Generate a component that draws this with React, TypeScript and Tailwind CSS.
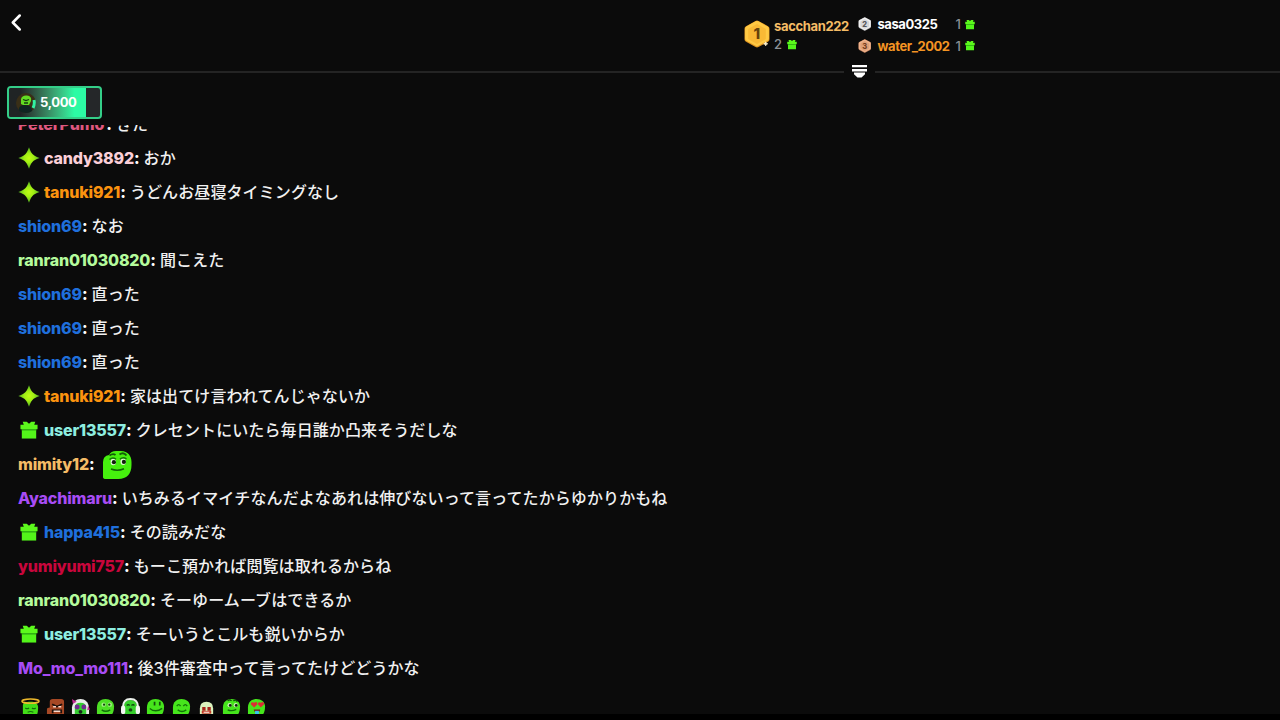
import type { ReactNode } from "react";

type Badge = "spark" | "gift";

interface Message {
  user: string;
  color: string;
  text?: string;
  badge?: Badge;
  emote?: boolean;
}

const messages: Message[] = [
  { user: "PeterPumo", color: "text-[#e0587f] pr-[2px]", text: "きた" },
  { user: "candy3892", color: "text-[#fbcfd8]", text: "おか", badge: "spark" },
  { user: "tanuki921", color: "text-[#fb930f]", text: "うどんお昼寝タイミングなし", badge: "spark" },
  { user: "shion69", color: "text-[#1f6fdc]", text: "なお" },
  { user: "ranran01030820", color: "text-[#b4fb9c]", text: "聞こえた" },
  { user: "shion69", color: "text-[#1f6fdc]", text: "直った" },
  { user: "shion69", color: "text-[#1f6fdc]", text: "直った" },
  { user: "shion69", color: "text-[#1f6fdc]", text: "直った" },
  { user: "tanuki921", color: "text-[#fb930f]", text: "家は出てけ言われてんじゃないか", badge: "spark" },
  { user: "user13557", color: "text-[#8eeee0]", text: "クレセントにいたら毎日誰か凸来そうだしな", badge: "gift" },
  { user: "mimity12", color: "text-[#f5bc66]", emote: true },
  { user: "Ayachimaru", color: "text-[#a84cf5]", text: "いちみるイマイチなんだよなあれは伸びないって言ってたからゆかりかもね" },
  { user: "happa415", color: "text-[#1f6fdc]", text: "その読みだな", badge: "gift" },
  { user: "yumiyumi757", color: "text-[#c8063c]", text: "もーこ預かれば閲覧は取れるからね" },
  { user: "ranran01030820", color: "text-[#b4fb9c]", text: "そーゆームーブはできるか" },
  { user: "user13557", color: "text-[#8eeee0]", text: "そーいうとこルも鋭いからか", badge: "gift" },
  { user: "Mo_mo_mo111", color: "text-[#a84cf5]", text: "後3件審査中って言ってたけどどうかな" },
];

function GiftIcon({ className }: { className: string }) {
  return (
    <svg viewBox="0 0 20 20" className={className}>
      <path d="M3 .8h4.500L10 3l2.500-2.200H17l-1.200 3.500H19.500v5H.5v-5h3.700z" fill="#5cf91c" />
      <path d="M2 9h16v10.500H2z" fill="#53f51a" />
      <path d="M2 9h16v1.600H2z" fill="#2eae12" />
    </svg>
  );
}

function SparkIcon() {
  return (
    <svg viewBox="0 0 22 22" className="h-[22px] w-[22px]">
      <defs>
        <radialGradient id="spark">
          <stop offset="0" stopColor="#c0fc14" />
          <stop offset="0.45" stopColor="#a0ee14" />
          <stop offset="1" stopColor="#4fae20" />
        </radialGradient>
      </defs>
      <path d="M11 .3C12.500 4.500 13.600 6.200 14.700 7.300C15.800 8.400 17.500 9.500 21.700 11C17.500 12.500 15.800 13.600 14.700 14.700C13.600 15.800 12.500 17.500 11 21.700C9.500 17.500 8.400 15.800 7.300 14.700C6.200 13.600 4.500 12.500.3 11C4.500 9.500 6.200 8.400 7.300 7.300C8.400 6.200 9.500 4.500 11 .3Z" fill="url(#spark)" />
    </svg>
  );
}

function HexBadge({ n, className, light, main, dark, ink }: { n: number; className: string; light: string; main: string; dark: string; ink: string }) {
  return (
    <svg viewBox="0 0 26 28" className={className}>
      <path d="M11.500.9a3 3 0 0 1 3 0l9.500 5.300a3 3 0 0 1 1.500 2.600v10.400a3 3 0 0 1-1.500 2.600l-9.500 5.300a3 3 0 0 1-3 0L2 21.800a3 3 0 0 1-1.500-2.600V8.800A3 3 0 0 1 2 6.200z" fill={dark} />
      <path d="M11.700 1.300a2.500 2.500 0 0 1 2.600 0l9.300 5.300a2.500 2.500 0 0 1 1.300 2.200v9.700a2.500 2.500 0 0 1-1.300 2.200L13 26.500 2.400 20.700a2.500 2.500 0 0 1-1.300-2.200V8.800a2.500 2.500 0 0 1 1.300-2.200z" fill={light} />
      <path d="M13 4l8.800 4.900v10.200L13 24l-8.800-4.900V8.900z" fill={main} />
      <text x="12.800" y="19.300" textAnchor="middle" fontFamily="Inter, sans-serif" fontWeight="800" fontSize="15" fill={ink}>{n}</text>
      {n === 1 && <path d="M21.700 21.800l.6 1.400 1.400.6-1.400.6-.6 1.400-.6-1.400-1.400-.6 1.400-.6z" fill="#fff3cf" stroke="#fff3cf" strokeWidth=".8" />}
    </svg>
  );
}

function SlimeEmote() {
  return (
    <svg viewBox="0 0 30 30" className="ml-[7px] mt-[2px] h-[30px] w-[30px]">
      <path d="M1 27V12Q1 6 7 5Q9 1 14 1h5c7 0 10.500 5 10.500 11v3c0 9-5 14-13 14H4Q1 29 1 27z" fill="#46f00e" />
      <path d="M7.500 5.500q3.500-2.500 6-.5M17.500 4.500q4-3 7 1" stroke="#125d08" strokeWidth="1.900" fill="none" />
      <ellipse cx="11.300" cy="12" rx="2.700" ry="3.200" fill="#dff5d3" />
      <ellipse cx="21.200" cy="11.700" rx="2.700" ry="3.200" fill="#dff5d3" />
      <circle cx="11.900" cy="12.200" r="2.100" fill="#111f0d" />
      <circle cx="21.900" cy="11.900" r="2.100" fill="#111f0d" />
      <path d="M7.500 9.500q3-2.700 6.500-.4M18 9.200q3-2.500 6.500-.4" stroke="#147509" strokeWidth="1.500" fill="none" />
      <path d="M9 19q6.500 2.500 13-.3" stroke="#126408" strokeWidth="1.500" fill="none" />
    </svg>
  );
}

const blob = "M1 19V10C1 4 5 1 10 1s9 3 9 8c0 6-2 10-6 10z";

// quick emote bar, each entry is drawn on a 20x20 box
const emotes: ReactNode[] = [
  <>
    <path d="M2 20V8c0-3 3-4 8-4s8 2 8 6-1 10-3 10z" fill="#43dd18" />
    <ellipse cx="10" cy="3.300" rx="9" ry="2.200" fill="none" stroke="#edb92c" strokeWidth="1.600" />
    <path d="M4.500 10.500q2 1.500 4 0M11.500 10.500q2 1.500 4 0M7 15q3-1.500 6 0" stroke="#126b0a" strokeWidth="1.200" fill="none" />
  </>,
  <>
    <path d="M1 20v-8q0-2 3-2V4q0-3 3-3h9q3 0 3 3v16z" fill="#a64825" />
    <path d="M6.500 6.500l5 2.500 5.500-2.500M7 16v-3h9v3" stroke="#1c100c" strokeWidth="1.800" fill="none" />
    <path d="M7.500 9.300h3M13 9.300h3M8 14h7" stroke="#f8d8cb" strokeWidth="1.500" />
  </>,
  <>
    <path d="M1 18V10C2 4 5 1 10 1s8 3 9 9v8l-5 2H5z" fill="#e9ece8" />
    <path d="M4 20V10q0-5 6-5t6 5v10z" fill="#35cf32" />
    <circle cx="6.500" cy="9.500" r="2.600" fill="#732a91" />
    <circle cx="13.500" cy="9.500" r="2.600" fill="#732a91" />
    <path d="M1 1l5 3-4 2zM18 8l2 4-3 1z" fill="#c42b93" />
    <ellipse cx="10" cy="14.500" rx="2" ry="2" fill="#17251a" />
  </>,
  <>
    <path d={blob} fill="#4ddf24" />
    <circle cx="8" cy="7" r="2.300" fill="#a5ee86" />
    <circle cx="14.500" cy="7" r="2.300" fill="#a5ee86" />
    <circle cx="8.500" cy="7" r="1.200" fill="#124c0b" />
    <circle cx="14" cy="7" r="1.200" fill="#124c0b" />
    <path d="M6 12.500q4 3 9 0" stroke="#126b0a" strokeWidth="1.400" fill="none" />
  </>,
  <>
    <path d="M3 20V9q0-7 7-7t7 7v11z" fill="#36cf2b" />
    <path d="M2 10Q2 1 10 1t8 9" stroke="#edf2ec" strokeWidth="2" fill="none" />
    <rect x="0" y="8" width="4.500" height="9" rx="2.200" fill="#f2f5f0" />
    <rect x="15.500" y="8" width="4.500" height="9" rx="2.200" fill="#f2f5f0" />
    <path d="M6 8q2-2 3 0M11 8q2-2 3 0" stroke="#123f0e" strokeWidth="1.500" fill="none" />
    <ellipse cx="10" cy="12.500" rx="2" ry="1.800" fill="#173e13" />
  </>,
  <>
    <path d={blob} fill="#46e51c" />
    <path d="M9 4v4M14.500 4v4" stroke="#124e0a" strokeWidth="1.800" />
    <path d="M4 11q6 5 13 0" stroke="#126b0a" strokeWidth="1.500" fill="none" />
  </>,
  <>
    <path d={blob} fill="#46e51c" />
    <path d="M5 8.500q2-3 4 0M12 8.500q2-3 4 0M6 12.500q4.500 3.500 9 0" stroke="#127108" strokeWidth="1.400" fill="none" />
  </>,
  <>
    <path d="M3 20V11q0-7 7-7t7 7v9z" fill="#dcf2bd" />
    <path d="M5.500 9.500h3.500v4H5.500zM11 9.500h3.500v4H11z" fill="#a8241b" />
    <path d="M5 13.500h10v3H5z" fill="#c53b28" />
    <path d="M7 15h6" stroke="#f7ead9" strokeWidth="1.200" />
  </>,
  <>
    <path d={blob} fill="#46e51c" />
    <path d="M6 3q2-2 4 0M12 3q3-2 4 1" stroke="#124e0a" strokeWidth="1.400" fill="none" />
    <circle cx="8" cy="7.500" r="2.200" fill="#cdefb9" />
    <circle cx="14.500" cy="7.500" r="2.200" fill="#cdefb9" />
    <circle cx="8.700" cy="7.800" r="1.500" fill="#10240c" />
    <circle cx="15" cy="7.800" r="1.500" fill="#10240c" />
    <path d="M6 12.500q4 2 9-.5" stroke="#126b0a" strokeWidth="1.300" fill="none" />
  </>,
  <>
    <path d={blob} fill="#46e51c" />
    <path d="M7.500 10L4 6.500q0-3 3.500-1.500Q11 3 11 6.500zM14.500 10L11.500 6.500q0-3 3-1.500 3.500-2 3.500 1.500z" fill="#dd2c35" />
    <path d="M7 12h7l-1 2.500H8z" fill="#7a1d1d" />
    <path d="M8.500 13.500h4v5h-4z" fill="#36c5ee" />
  </>,
];

function ChatRow({ m }: { m: Message }) {
  return (
    <div className="flex h-[34px] shrink-0 items-center whitespace-pre">
      {m.badge && (
        <span className="mr-1 flex w-[22px] items-center justify-center">
          {m.badge === "spark" ? <SparkIcon /> : <GiftIcon className="mr-px h-[18px] w-[18px]" />}
        </span>
      )}
      <span className={`font-extrabold tracking-[-0.17px] ${m.color}`}>{m.user}</span>
      <span className="font-extrabold">:</span>
      {m.emote ? <SlimeEmote /> : <span className="ml-[4px] font-medium tracking-[0.1px] text-[#f1f1f1]">{m.text}</span>}
    </div>
  );
}

function Gifted({ count, className }: { count: number; className: string }) {
  return (
    <span className={`flex items-center font-medium text-[#8b9196] ${className}`}>
      {count}
      <GiftIcon className="h-[11px] w-[10px]" />
    </span>
  );
}

export default function App() {
  return (
    <div className="flex h-[720px] w-[1280px] flex-col overflow-hidden bg-[#0b0b0b] font-['Inter','Noto_Sans_CJK_JP',sans-serif] text-white">
      <header className="flex h-[60px] shrink-0">
        <button className="ml-[10px] mt-[14px] h-4 w-[734px]" aria-label="Back">
          <svg viewBox="0 0 14 18" className="h-[18px] w-[14px]" fill="none" stroke="#fff" strokeWidth="2.500" strokeLinecap="round" strokeLinejoin="round">
            <path d="M9.700 1.500L2.800 8.500l6.900 7" />
          </svg>
        </button>
        <div className="mt-5 w-[30px]">
          <HexBadge n={1} className="h-[28px] w-[26px]" light="#ffc944" main="#f9b935" dark="#e09520" ink="#65420c" />
        </div>
        <div className="mt-[17px] w-[84px] text-[13px] leading-[18px]">
          <div className="font-bold tracking-[-0.35px] text-[#f5bc66]">sacchan222</div>
          <Gifted count={2} className="gap-[5px]" />
        </div>
        <div className="mt-[13px] flex flex-col text-[13px] leading-[22px]">
          <div className="flex items-center">
            <HexBadge n={2} className="mr-[6px] h-[14px] w-[13.500px]" light="#f0f0f0" main="#d6d6d8" dark="#b5b5b8" ink="#58585c" />
            <span className="w-[78px] font-bold tracking-[-0.42px]">sasa0325</span>
            <Gifted count={1} className="gap-[4px]" />
          </div>
          <div className="-mt-[0.500px] flex items-center">
            <HexBadge n={3} className="mr-[6px] h-[14px] w-[13.500px]" light="#efb38b" main="#dda078" dark="#c08060" ink="#754020" />
            <span className="w-[78px] font-bold tracking-[-0.42px] text-[#f49423]">water_2002</span>
            <Gifted count={1} className="gap-[4px]" />
          </div>
        </div>
      </header>

      <div className="flex h-[23px] shrink-0 items-center">
        <div className="h-[2px] w-[844px] bg-[#242424]" />
        <svg viewBox="0 0 31 14" className="mb-px h-[14px] w-[31px]" fill="#fff">
          <path d="M8 1h15v2.200H8zM8 5h15v2.500H8zM10 8.500h11v1.700L17.500 13.600h-4L10 10.200z" />
        </svg>
        <div className="h-[2px] flex-1 bg-[#242424]" />
      </div>

      <div className="ml-[7px] mt-[3px] flex h-[33px] w-[95px] shrink-0 overflow-hidden rounded-[4px] border-2 border-[#34ce88] bg-[#252729]">
        <div className="flex w-[77px] items-center bg-linear-to-r from-[#202425] from-15% to-[#2cfba4] to-85% pl-[7px]">
          <svg viewBox="0 0 20 20" className="h-5 w-5">
            <circle cx="10" cy="10" r="10" fill="#392f17" />
            <path d="M3 18q-1-6 6-6 7 0 7 6-5 4-13 0z" fill="#102522" />
            <path d="M5 11V6q1-4 6-3.500 5 .5 4 5.500l-2 4H7z" fill="#62dc23" />
            <path d="M7 6.500l3 1 3-1M8 10h4" stroke="#143b10" strokeWidth="1.300" fill="none" />
            <path d="M18 7q1 4-1 8" stroke="#32f2a2" strokeWidth="3" fill="none" />
          </svg>
          <span className="ml-1 text-[13px] font-bold tracking-[-0.35px]">5,000</span>
        </div>
      </div>

      <main className="mt-[6px] flex h-[560px] shrink-0 flex-col justify-end overflow-hidden pl-[18px] text-base leading-[34px]">
        {messages.map((m, i) => (
          <ChatRow key={i} m={m} />
        ))}
      </main>

      <footer className="flex h-[29px] shrink-0 items-start gap-[6.100px] overflow-hidden pl-[21px] pt-[13px]">
        {emotes.map((e, i) => (
          <svg key={i} viewBox="0 0 20 20" className="h-[19px] w-[19px] shrink-0">
            {e}
          </svg>
        ))}
      </footer>
      <div className="flex-1 bg-black" />
    </div>
  );
}
